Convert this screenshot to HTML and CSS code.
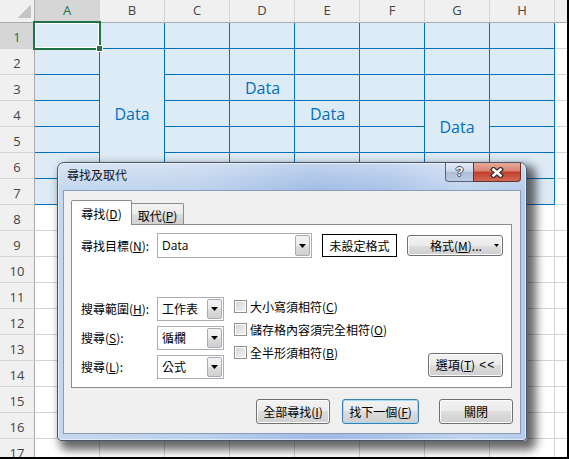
FILE: index.html
```html
<!DOCTYPE html>
<html lang="zh-Hant">
<head>
<meta charset="utf-8">
<title>尋找及取代</title>
<link rel="stylesheet" href="styles.css">
</head>
<body>
<div class="screen">
  <div class="sheet">
    <div class="corner"></div>
    <div class="cols">
      <div class="ch on">A</div><div class="ch">B</div><div class="ch">C</div><div class="ch">D</div>
      <div class="ch">E</div><div class="ch">F</div><div class="ch">G</div><div class="ch">H</div>
      <div class="ch rest"></div>
    </div>
    <div class="rows">
      <div class="rh on">1</div><div class="rh">2</div><div class="rh">3</div><div class="rh">4</div>
      <div class="rh">5</div><div class="rh">6</div><div class="rh">7</div><div class="rh">8</div>
      <div class="rh">9</div><div class="rh">10</div><div class="rh">11</div><div class="rh">12</div>
      <div class="rh">13</div><div class="rh">14</div><div class="rh">15</div><div class="rh">16</div>
      <div class="rh">17</div>
    </div>
    <div class="body">
      <div class="block">
        <div class="a1"><i class="handle"></i></div>
        <div class="data merged mb">Data</div>
        <div class="data d3">Data</div>
        <div class="data e4">Data</div>
        <div class="data merged mg">Data</div>
      </div>
    </div>
  </div>

  <div class="dlg">
    <div class="titlebar">
      <span class="title">尋找及取代</span>
      <div class="tbtns">
        <span class="tb help">?</span>
        <span class="tb close">
          <svg width="14" height="11" viewBox="0 0 14 11"><path d="M3.5 2.5L10.5 8.5M10.5 2.5L3.5 8.5" stroke="#3b2b2b" stroke-width="5" stroke-linecap="square"/><path d="M3.5 2.5L10.5 8.5M10.5 2.5L3.5 8.5" stroke="#fff" stroke-width="2.6" stroke-linecap="square"/></svg>
        </span>
      </div>
    </div>
    <div class="client">
      <div class="tabs">
        <span class="tab on">尋找(<u>D</u>)</span>
        <span class="tab off">取代(<u>P</u>)</span>
      </div>
      <div class="panel">
        <div class="row1">
          <span class="lbl">尋找目標(<u>N</u>):</span>
          <div class="combo wide"><span class="val latin">Data</span><span class="dd"><svg width="7" height="4" viewBox="0 0 7 4"><path d="M0 0h7L3.5 4z" fill="#000"/></svg></span></div>
          <div class="fmtbox">未設定格式</div>
          <div class="btn fmt">格式(<u>M</u>)...<svg class="fa" width="5" height="3" viewBox="0 0 5 3"><path d="M0 0h5L2.5 3z" fill="#000"/></svg></div>
        </div>
        <div class="opts">
          <div class="col1">
            <div class="orow"><span class="lbl">搜尋範圍(<u>H</u>):</span><div class="combo sm"><span class="val">工作表</span><span class="dd"><svg width="7" height="4" viewBox="0 0 7 4"><path d="M0 0h7L3.5 4z" fill="#000"/></svg></span></div></div>
            <div class="orow"><span class="lbl">搜尋(<u>S</u>):</span><div class="combo sm"><span class="val">循欄</span><span class="dd"><svg width="7" height="4" viewBox="0 0 7 4"><path d="M0 0h7L3.5 4z" fill="#000"/></svg></span></div></div>
            <div class="orow"><span class="lbl">搜尋(<u>L</u>):</span><div class="combo sm"><span class="val">公式</span><span class="dd"><svg width="7" height="4" viewBox="0 0 7 4"><path d="M0 0h7L3.5 4z" fill="#000"/></svg></span></div></div>
          </div>
          <div class="col2">
            <div class="crow"><i class="cb"></i><span>大小寫須相符(<u>C</u>)</span></div>
            <div class="crow"><i class="cb"></i><span>儲存格內容須完全相符(<u>O</u>)</span></div>
            <div class="crow"><i class="cb"></i><span>全半形須相符(<u>B</u>)</span></div>
          </div>
          <div class="btn optbtn">選項(<u>T</u>) <span class="lt">&lt;&lt;</span></div>
        </div>
      </div>
      <div class="actions">
        <div class="btn act">全部尋找(<u>I</u>)</div>
        <div class="btn act def">找下一個(<u>F</u>)</div>
        <div class="btn act last">關閉</div>
      </div>
    </div>
  </div>
</div>
</body>
</html>
```

FILE: styles.css
```css
html, body { margin: 0; padding: 0; background: #fff; }

.screen {
  width: 569px;
  height: 459px;
  background: #000;
  position: relative;
  overflow: hidden;
}

/* ---------- spreadsheet ---------- */
.sheet {
  width: 567px;
  height: 457px;
  background: #fff;
  display: grid;
  grid-template-columns: 35px 1fr;
  grid-template-rows: 23px 1fr;
  overflow: hidden;
  font-family: "Open Sans", "Noto Sans", sans-serif;
}

.corner {
  box-sizing: border-box;
  border-right: 1px solid #ababab;
  border-bottom: 1px solid #ababab;
  background:
    linear-gradient(to bottom right, transparent 50%, #c4c4c4 50%) 17px 5px / 14px 13px no-repeat,
    #f0f0f0;
}

.cols { display: flex; }
.ch {
  width: 65px;
  flex: none;
  box-sizing: border-box;
  border-right: 1px solid #d4d4d4;
  border-bottom: 1px solid #ababab;
  background: #f0f0f0;
  color: #444;
  font-size: 13px;
  line-height: 21px;
  text-align: center;
}
.ch.rest { flex: 1; width: auto; border-right: none; }
.ch.on { background: #d6d6d6; color: #217346; }

.rows { display: flex; flex-direction: column; }
.rh {
  height: 26px;
  flex: none;
  box-sizing: border-box;
  border-right: 1px solid #ababab;
  border-bottom: 1px solid #d4d4d4;
  background: #f0f0f0;
  color: #444;
  font-size: 13px;
  line-height: 22px;
  padding-top: 3px;
  text-align: center;
}
.rh.on { background: #d6d6d6; color: #217346; }

.body {
  display: grid;
  grid-template-columns: repeat(8, 65px) 1fr;
  grid-template-rows: repeat(17, 26px);
  background:
    repeating-linear-gradient(to right, transparent 0 64px, #d4d4d4 64px 65px),
    repeating-linear-gradient(to bottom, transparent 0 25px, #d4d4d4 25px 26px),
    #fff;
}

.block {
  grid-area: 1 / 1 / 8 / 9;
  display: grid;
  grid-template-columns: repeat(8, 65px);
  grid-template-rows: repeat(7, 26px);
  background:
    repeating-linear-gradient(to right, transparent 0 64px, #0070c0 64px 65px),
    repeating-linear-gradient(to bottom, transparent 0 25px, #0070c0 25px 26px),
    #ddebf7;
}

.a1 {
  grid-area: 1 / 1;
  margin: -2px -1px -1px -2px;
  border: 2px solid #217346;
  box-shadow: inset 0 0 0 1px #fff;
  position: relative;
}
.handle {
  position: absolute;
  right: -3px;
  bottom: -3px;
  width: 5px;
  height: 5px;
  background: #217346;
  box-shadow: 0 0 0 1px #fff;
}

.data {
  display: flex;
  align-items: center;
  justify-content: center;
  color: #0070c0;
  font-size: 16px;
}
.merged {
  box-sizing: border-box;
  background: #ddebf7;
  border-right: 1px solid #0070c0;
  border-bottom: 1px solid #0070c0;
}
.mb { grid-area: 2 / 2 / 7 / 3; }
.mg { grid-area: 4 / 7 / 6 / 8; }
.d3 { grid-area: 3 / 4; }
.e4 { grid-area: 4 / 5; }

/* ---------- dialog ---------- */
.dlg {
  position: absolute;
  left: 57px;
  top: 162px;
  width: 470px;
  height: 279px;
  box-sizing: border-box;
  border: 1px solid #4a5568;
  border-radius: 7px 7px 4px 4px;
  padding: 0 5px 6px 5px;
  display: flex;
  flex-direction: column;
  background:
    linear-gradient(180deg, rgba(255,255,255,.35), rgba(255,255,255,0) 28px),
    linear-gradient(90deg, #c4d7ef 0%, #bcd1ec 30%, #a0bce5 55%, #a9c2e8 70%, #c1d4ee 86%, #b5cbea 100%);
  box-shadow: inset 0 0 0 1px rgba(255,255,255,.55), 6px 6px 10px 3px rgba(0,0,0,.6);
  font-family: "Noto Sans CJK TC", "Noto Sans CJK JP", sans-serif;
  font-size: 12px;
  line-height: 16px;
  color: #000;
}

.titlebar {
  height: 27px;
  flex: none;
  display: flex;
  align-items: flex-start;
}
.title { margin: 4px 0 0 4px; color: #111; }
.tbtns { margin-left: auto; display: flex; }
.tb {
  height: 19px;
  box-sizing: border-box;
  border: 1px solid #56657d;
  border-top: none;
  display: flex;
  align-items: center;
  justify-content: center;
}
.help {
  width: 28px;
  border-radius: 0 0 0 4px;
  border-right: none;
  background: linear-gradient(#e3ebf5, #cdd9ea 45%, #aebfd8 52%, #bccbe0);
  color: #fff;
  font-family: "Liberation Sans", sans-serif;
  font-weight: bold;
  font-size: 13px;
  text-shadow: 1px 0 #3c4a60, -1px 0 #3c4a60, 0 1px #3c4a60, 0 -1px #3c4a60;
}
.close {
  width: 48px;
  border-color: #6b2f28;
  border-radius: 0 0 4px 0;
  background: linear-gradient(#e8ab9e, #d98674 42%, #c2412e 52%, #cf6a54);
}

.client {
  flex: 1;
  border: 1px solid #8a9cb8;
  background: #f0f0f0;
  padding: 9px 8px 0 7px;
  display: flex;
  flex-direction: column;
}

.tabs { display: flex; align-items: flex-end; height: 24px; flex: none; }
.tab {
  box-sizing: border-box;
  border: 1px solid #898c95;
  border-bottom: none;
  text-align: center;
}
.tab.on {
  width: 61px;
  height: 25px;
  margin-bottom: -1px;
  padding-top: 5px;
  background: #fff;
  position: relative;
  z-index: 1;
  border-radius: 2px 2px 0 0;
}
.tab.off {
  width: 52px;
  height: 21px;
  padding-top: 4px;
  border-left: none;
  border-radius: 0 2px 0 0;
  background: linear-gradient(#f3f3f3, #ebebeb 50%, #dddddd 50%, #d1d1d1);
}

.panel {
  height: 164px;
  flex: none;
  box-sizing: border-box;
  border: 1px solid #898c95;
  background: #fff;
  padding: 8px 8px 0 9px;
}

.row1 { display: flex; align-items: center; height: 25px; }
.lbl { width: 76px; flex: none; }

.combo {
  box-sizing: border-box;
  height: 25px;
  border: 1px solid #abadb3;
  background: #fff;
  display: flex;
  align-items: stretch;
  flex: none;
}
.combo.wide { width: 155px; }
.combo.sm { width: 67px; height: 24px; }
.combo .val { flex: 1; padding-left: 4px; display: flex; align-items: center; }
.latin { font-family: "Open Sans", "Noto Sans", sans-serif; }
.dd {
  width: 15px;
  margin: 1px;
  box-sizing: border-box;
  border: 1px solid #a7abb3;
  border-radius: 2px;
  background: linear-gradient(#f3f3f3, #ebebeb 50%, #dddddd 50%, #d0d0d0);
  display: flex;
  align-items: center;
  justify-content: center;
}

.fmtbox {
  box-sizing: border-box;
  width: 75px;
  height: 23px;
  margin-left: 10px;
  border: 1px solid #000;
  background: #fff;
  display: flex;
  align-items: center;
  justify-content: center;
}

.btn {
  box-sizing: border-box;
  border: 1px solid #707070;
  border-radius: 3px;
  background: linear-gradient(#f2f2f2, #ebebeb 50%, #dddddd 50%, #cfcfcf);
  box-shadow: inset 0 0 0 1px #fcfcfc;
  display: flex;
  align-items: center;
  justify-content: center;
  flex: none;
}
.btn.fmt {
  width: 96px;
  height: 21px;
  margin-left: 10px;
  justify-content: flex-start;
  padding-left: 22px;
}
.btn.fmt .fa { margin-left: 12px; }

.opts { display: flex; margin-top: 39px; }
.col1 { display: flex; flex-direction: column; gap: 5px; }
.orow { display: flex; align-items: center; height: 24px; }
.col2 { display: flex; flex-direction: column; margin: -2px 0 0 10px; }
.crow { display: flex; align-items: center; height: 23px; }
.cb {
  width: 13px;
  height: 13px;
  box-sizing: border-box;
  border: 1px solid #8e8f8f;
  background: linear-gradient(135deg, #d2d2d2, #f6f6f6);
  box-shadow: inset 0 0 0 1px #fff;
  margin-right: 3px;
  flex: none;
}
.btn.optbtn {
  width: 75px;
  height: 24px;
  margin: 0 0 2px auto;
  align-self: flex-end;
}
.lt { letter-spacing: 1px; margin-left: 4px; font-family: "Liberation Sans", sans-serif; }

.actions {
  display: flex;
  justify-content: flex-end;
  margin: 11px -1px 0 0;
}
.btn.act { height: 25px; width: 74px; }
.btn.def {
  width: 77px;
  margin-left: 12px;
  border-color: #3c7fb1;
  box-shadow: inset 0 0 0 1px #9fdcf7;
}
.btn.last { margin-left: 20px; }
```
